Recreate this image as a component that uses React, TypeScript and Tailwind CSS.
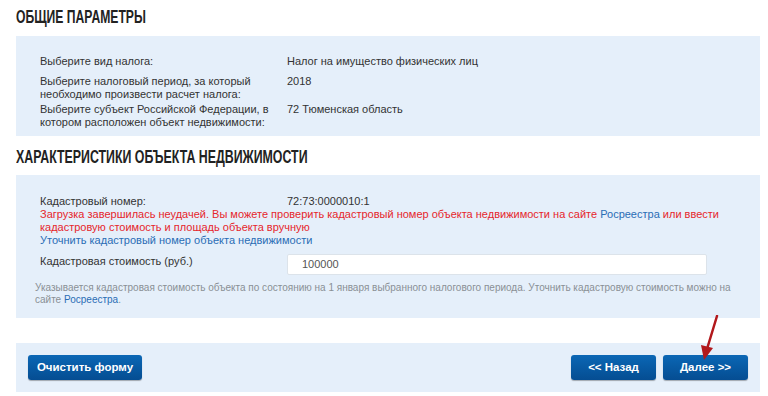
import React from "react";

const heading =
  "inline-block origin-left scale-x-[0.64] font-['Liberation_Sans',Arial,sans-serif] font-bold text-[19px] leading-[24px] text-[#222] uppercase whitespace-nowrap";

const btn =
  "h-[25px] rounded-[3px] bg-gradient-to-b from-[#0b67b5] to-[#054d92] text-white font-bold text-[11.5px] font-['Liberation_Sans',Arial,sans-serif] shadow-[0_1px_1px_rgba(0,0,0,0.3)]";

const App = () => {
  return (
    <div className="w-[768px] h-[396px] bg-white pl-4 pr-2 font-['Liberation_Sans',Arial,sans-serif] text-[11px] text-[#333] overflow-hidden">
      <div className="pt-[5px] h-[36px]">
        <h2 className={heading}>Общие параметры</h2>
      </div>

      <div className="bg-[#e5effa] h-[100px] pl-6 pt-[19px]">
        <div className="grid grid-cols-[247px_1fr] leading-[13px]">
          <div className="h-[20px]">Выберите вид налога:</div>
          <div>Налог на имущество физических лиц</div>
          <div className="w-[230px] h-[28px]">
            Выберите налоговый период, за который необходимо произвести расчет налога:
          </div>
          <div>2018</div>
          <div className="w-[240px]">
            Выберите субъект Российской Федерации, в котором расположен объект недвижимости:
          </div>
          <div>72 Тюменская область</div>
        </div>
      </div>

      <div className="pt-[9px] h-[39px]">
        <h2 className={`${heading} scale-x-[0.65]`}>Характеристики объекта недвижимости</h2>
      </div>

      <div className="bg-[#e5effa] h-[143px] pl-6 pt-[20px]">
        <div className="grid grid-cols-[247px_1fr] leading-[13px]">
          <div>Кадастровый номер:</div>
          <div>72:73:0000010:1</div>
        </div>
        <div className="leading-[13px] text-[#e5262c] w-[690px]">
          Загрузка завершилась неудачей. Вы можете проверить кадастровый номер объекта
          недвижимости на сайте <span className="text-[#2a6db5]">Росреестра</span> или ввести
          кадастровую стоимость и площадь объекта вручную
        </div>
        <div className="leading-[13px] text-[#2a6db5]">
          Уточнить кадастровый номер объекта недвижимости
        </div>
        <div className="grid grid-cols-[247px_420px] items-start mt-[7px]">
          <div className="leading-[14px]">Кадастровая стоимость (руб.)</div>
          <div className="h-[21px] bg-white border border-[#dce3ea] rounded-[2px] pl-[14px] flex items-center text-[#555]">
            100000
          </div>
        </div>
        <div className="text-[10px] leading-[12px] text-[#8a8f95] mt-[7px] -ml-[5px] w-[715px]">
          Указывается кадастровая стоимость объекта по состоянию на 1 января выбранного
          налогового периода. Уточнить кадастровую стоимость можно на сайте{" "}
          <span className="text-[#2a6db5]">Росреестра</span>.
        </div>
      </div>

      <div className="h-[25px]" />

      <div className="relative bg-[#e5effa] h-[49px] px-3 flex items-center justify-between">
        <button className={`${btn} w-[114px]`}>Очистить форму</button>
        <div className="flex gap-[7px]">
          <button className={`${btn} w-[85px]`}>&lt;&lt; Назад</button>
          <button className={`${btn} w-[85px]`}>Далее &gt;&gt;</button>
        </div>
        <svg
          className="absolute left-[682px] top-[-28px]"
          width="24"
          height="48"
          viewBox="0 0 24 48"
        >
          <path d="M19 1 L9 34" stroke="#b2181c" strokeWidth="2.5" strokeLinecap="round" />
          <path d="M3 30 L6 45 L15 33 Z" fill="#b2181c" />
        </svg>
      </div>
    </div>
  );
};

export default App;
